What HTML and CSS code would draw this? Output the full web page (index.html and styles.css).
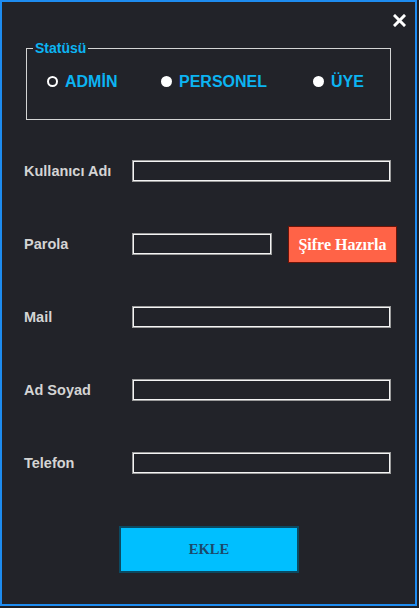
FILE: index.html
```html
<!DOCTYPE html>
<html lang="tr">
<head>
<meta charset="utf-8">
<title>Kullanıcı Ekle</title>
<link rel="stylesheet" href="styles.css">
</head>
<body>
<div class="window">
  <div class="header">
    <button class="close" aria-label="Kapat">
      <svg width="13" height="13" viewBox="0 0 13 13"><path d="M2 2 L11 11 M11 2 L2 11" stroke="#fff" stroke-width="3" stroke-linecap="square"/></svg>
    </button>
  </div>
  <fieldset class="status">
    <legend>Statüsü</legend>
    <div class="radios">
      <label class="radio r-admin"><span class="dot ring"></span>ADMİN</label>
      <label class="radio r-personel"><span class="dot"></span>PERSONEL</label>
      <label class="radio"><span class="dot"></span>ÜYE</label>
    </div>
  </fieldset>
  <div class="form">
    <div class="row"><span class="lbl">Kullanıcı Adı</span><span class="input"></span></div>
    <div class="row"><span class="lbl">Parola</span><span class="input short"></span><button class="gen">Şifre Hazırla</button></div>
    <div class="row"><span class="lbl">Mail</span><span class="input"></span></div>
    <div class="row"><span class="lbl">Ad Soyad</span><span class="input"></span></div>
    <div class="row"><span class="lbl">Telefon</span><span class="input"></span></div>
  </div>
  <div class="actions">
    <button class="add">EKLE</button>
  </div>
</div>
</body>
</html>
```
FILE: styles.css
```css
* { box-sizing: border-box; }
html, body { margin: 0; padding: 0; }
body {
  background: #1d1e23;
  width: 419px;
  height: 608px;
  overflow: hidden;
  font-family: "Liberation Sans", Arial, sans-serif;
}
.window {
  width: 417px;
  height: 606px;
  background: #222329;
  border: 2px solid #1e8cf0;
  display: flex;
  flex-direction: column;
}
.header {
  height: 38px;
  display: flex;
  justify-content: flex-end;
  align-items: flex-start;
  padding: 12px 9px 0 0;
}
.close {
  background: none;
  border: 0;
  padding: 0;
  width: 13px;
  height: 13px;
  display: flex;
  cursor: pointer;
}
.status {
  margin: 0 24px 0 24px;
  padding: 0;
  border: 1px solid #d4d4d4;
  height: 80px;
}
.status legend {
  margin-left: 6px;
  padding: 0 2px;
  color: #0cb4f2;
  font-weight: bold;
  font-size: 14px;
  line-height: 16px;
}
.radios {
  display: flex;
  align-items: center;
  padding: 17px 0 0 20px;
}
.radio {
  display: flex;
  align-items: center;
  gap: 7px;
  color: #0cb4f2;
  font-weight: bold;
  font-size: 16px;
  line-height: 18px;
}
.r-admin { width: 114px; }
.r-personel { width: 152px; }
.dot {
  width: 11px;
  height: 11px;
  border-radius: 50%;
  background: #fff;
  margin-top: -1px;
}
.dot.ring {
  background: transparent;
  border: 2px solid #fff;
}
.form {
  display: flex;
  flex-direction: column;
  gap: 36px;
  margin-top: 32px;
  padding-left: 22px;
}
.row {
  height: 37px;
  display: flex;
  align-items: center;
}
.lbl {
  width: 108px;
  color: #d4d4d4;
  font-weight: bold;
  font-size: 14.5px;
  margin-top: 1px;
}
.input {
  width: 259px;
  height: 22px;
  border: 1px solid #9c9c9c;
  box-shadow: inset 0 0 0 1px #f4f4f4;
  background: #222329;
}
.input.short { width: 140px; }
.gen {
  margin-left: 16px;
  width: 109px;
  height: 37px;
  margin-top: 2px;
  background: #ff6347;
  border: 1px solid #6e1408;
  color: #fff;
  font-family: "Liberation Serif", "Times New Roman", serif;
  font-weight: bold;
  font-size: 16px;
  padding: 0;
}
.actions {
  margin-top: 45px;
  padding-left: 117px;
}
.add {
  width: 180px;
  height: 47px;
  background: #00bfff;
  border: 2px solid #0b4a62;
  color: #1b4a6c;
  font-family: "Liberation Serif", "Times New Roman", serif;
  font-weight: bold;
  font-size: 14.5px;
  padding: 0;
}
```
